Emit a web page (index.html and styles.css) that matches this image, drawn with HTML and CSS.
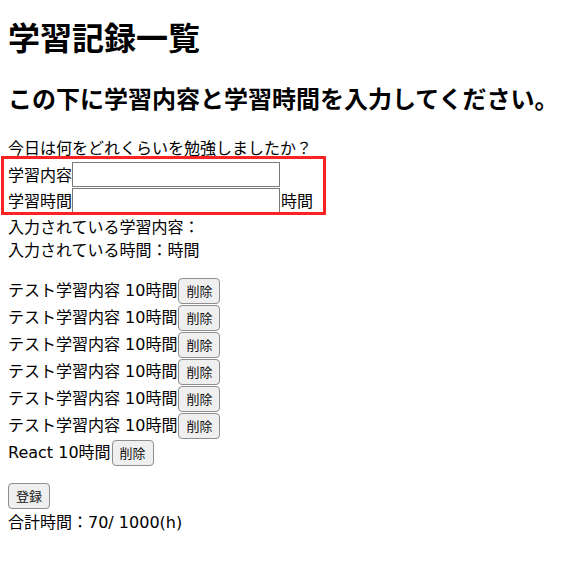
FILE: index.html
```html
<!DOCTYPE html>
<html lang="ja">
<head>
<meta charset="utf-8">
<title>学習記録一覧</title>
<link rel="stylesheet" href="styles.css">
</head>
<body>
<h1 class="title">学習記録一覧</h1>
<h2 class="lead">この下に学習内容と学習時間を入力してください。</h2>
<div class="line">今日は何をどれくらいを勉強しましたか？</div>
<div class="form">
  <div class="field"><span class="label">学習内容</span><input type="text" class="input"></div>
  <div class="field"><span class="label">学習時間</span><input type="text" class="input"><span class="label">時間</span></div>
</div>
<div class="line">入力されている学習内容：</div>
<div class="line">入力されている時間：時間</div>
<div class="records">
  <div class="record">テスト学習内容 10時間<button class="btn">削除</button></div>
  <div class="record">テスト学習内容 10時間<button class="btn">削除</button></div>
  <div class="record">テスト学習内容 10時間<button class="btn">削除</button></div>
  <div class="record">テスト学習内容 10時間<button class="btn">削除</button></div>
  <div class="record">テスト学習内容 10時間<button class="btn">削除</button></div>
  <div class="record">テスト学習内容 10時間<button class="btn">削除</button></div>
  <div class="record">React 10時間<button class="btn">削除</button></div>
</div>
<div class="actions"><button class="btn">登録</button></div>
<div class="line">合計時間：70/ 1000(h)</div>
</body>
</html>
```
FILE: styles.css
```css
html, body {
  margin: 0;
}
body {
  padding: 8px;
  font-family: "DejaVu Sans", "Noto Sans CJK JP", sans-serif;
  font-size: 16px;
  line-height: 23px;
  color: #000;
  background: #fff;
}
.title {
  font-family: "Noto Sans CJK JP", sans-serif;
  font-size: 32px;
  line-height: 46px;
  font-weight: 700;
  margin: 5px 0 21px;
}
.lead {
  font-family: "Noto Sans CJK JP", sans-serif;
  font-size: 24px;
  line-height: 35px;
  font-weight: 700;
  margin: 0 0 20px;
}
.line {
  height: 21px;
  padding-top: 2px;
}
.form {
  position: relative;
  padding: 3px 0 1px;
}
.form::after {
  content: "";
  position: absolute;
  left: -7px;
  top: -2px;
  width: 325px;
  height: 59px;
  box-sizing: border-box;
  border: 3px solid #fa2222;
  pointer-events: none;
}
.field {
  display: flex;
  align-items: center;
  height: 26px;
}
.label {
  padding-top: 3px;
}
.input {
  box-sizing: border-box;
  width: 208px;
  height: 25px;
  margin: 0 1px 0 0;
  padding: 1px 2px;
  border: 1px solid #7a7a7a;
  border-radius: 0;
  background: #fff;
  font: inherit;
}
.records {
  margin-top: 17px;
}
.record {
  display: flex;
  align-items: center;
  height: 27px;
}
.actions {
  display: flex;
  align-items: center;
  height: 27px;
  margin-top: 16px;
}
.btn {
  box-sizing: border-box;
  height: 26px;
  margin: 0 0 0 1px;
  padding: 0 7px;
  border: 1px solid #8e8e8e;
  border-radius: 4px;
  background: #efefef;
  color: #111;
  font-family: "Noto Sans CJK JP", sans-serif;
  font-size: 13px;
  line-height: 24px;
}
.actions .btn {
  margin-left: 0;
}
```
